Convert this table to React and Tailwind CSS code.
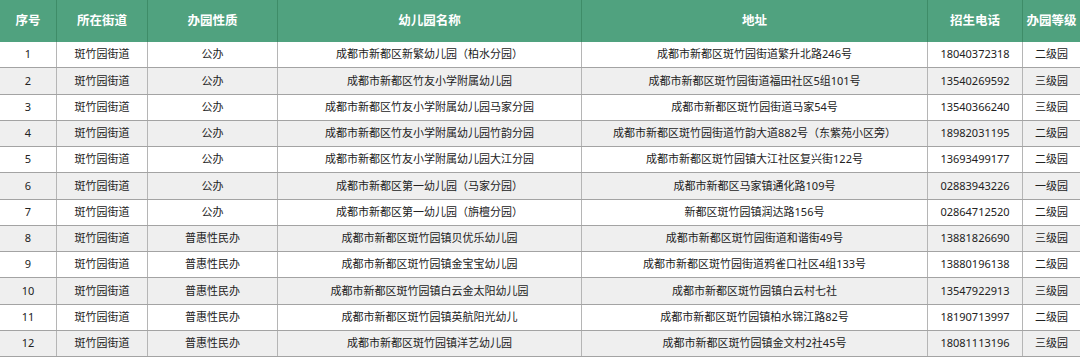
import React from "react";

const rows = [
  ["1", "斑竹园街道", "公办", "成都市新都区新繁幼儿园（柏水分园）", "成都市新都区斑竹园街道繁升北路246号", "18040372318", "二级园"],
  ["2", "斑竹园街道", "公办", "成都市新都区竹友小学附属幼儿园", "成都市新都区斑竹园街道福田社区5组101号", "13540269592", "三级园"],
  ["3", "斑竹园街道", "公办", "成都市新都区竹友小学附属幼儿园马家分园", "成都市新都区斑竹园街道马家54号", "13540366240", "三级园"],
  ["4", "斑竹园街道", "公办", "成都市新都区竹友小学附属幼儿园竹韵分园", "成都市新都区斑竹园街道竹韵大道882号（东紫苑小区旁）", "18982031195", "二级园"],
  ["5", "斑竹园街道", "公办", "成都市新都区竹友小学附属幼儿园大江分园", "成都市新都区斑竹园镇大江社区复兴街122号", "13693499177", "二级园"],
  ["6", "斑竹园街道", "公办", "成都市新都区第一幼儿园（马家分园）", "成都市新都区马家镇通化路109号", "02883943226", "一级园"],
  ["7", "斑竹园街道", "公办", "成都市新都区第一幼儿园（旃檀分园）", "新都区斑竹园镇润达路156号", "02864712520", "二级园"],
  ["8", "斑竹园街道", "普惠性民办", "成都市新都区斑竹园镇贝优乐幼儿园", "成都市新都区斑竹园街道和谐街49号", "13881826690", "三级园"],
  ["9", "斑竹园街道", "普惠性民办", "成都市新都区斑竹园镇金宝宝幼儿园", "成都市新都区斑竹园街道鸦雀口社区4组133号", "13880196138", "二级园"],
  ["10", "斑竹园街道", "普惠性民办", "成都市新都区斑竹园镇白云金太阳幼儿园", "成都市新都区斑竹园镇白云村七社", "13547922913", "三级园"],
  ["11", "斑竹园街道", "普惠性民办", "成都市新都区斑竹园镇英航阳光幼儿", "成都市新都区斑竹园镇柏水锦江路82号", "18190713997", "二级园"],
  ["12", "斑竹园街道", "普惠性民办", "成都市新都区斑竹园镇洋艺幼儿园", "成都市新都区斑竹园镇金文村2社45号", "18081113196", "三级园"],
];

const headers = ["序号", "所在街道", "办园性质", "幼儿园名称", "地址", "招生电话", "办园等级"];

const font = { fontFamily: '"Noto Sans", "Noto Sans CJK SC", sans-serif' };

export default function App() {
  return (
    <div className="w-[1080px] h-[357px] overflow-hidden bg-white" style={font}>
      <div className="grid grid-cols-[57px_91px_130px_304px_346px_95px_57px] h-[42px] bg-[#50a27f]">
        {headers.map((h, i) => (
          <div
            key={i}
            className={`flex items-center justify-center text-white font-bold text-[12.5px] whitespace-nowrap ${i < 6 ? "border-r border-[#3e8c68]" : ""}`}
          >
            {h}
          </div>
        ))}
      </div>
      {rows.map((r, ri) => (
        <div
          key={ri}
          className={`grid grid-cols-[57px_91px_130px_304px_346px_95px_57px] h-[26.25px] border-b border-[#a3a3a3] ${ri % 2 === 1 ? "bg-[#efefef]" : "bg-white"}`}
        >
          {r.map((c, ci) => (
            <div
              key={ci}
              className={`flex items-center justify-center text-[#222222] text-[11px] whitespace-nowrap ${ci < 6 ? "border-r border-[#b5b5b5]" : ""}`}
            >
              {c}
            </div>
          ))}
        </div>
      ))}
    </div>
  );
}
